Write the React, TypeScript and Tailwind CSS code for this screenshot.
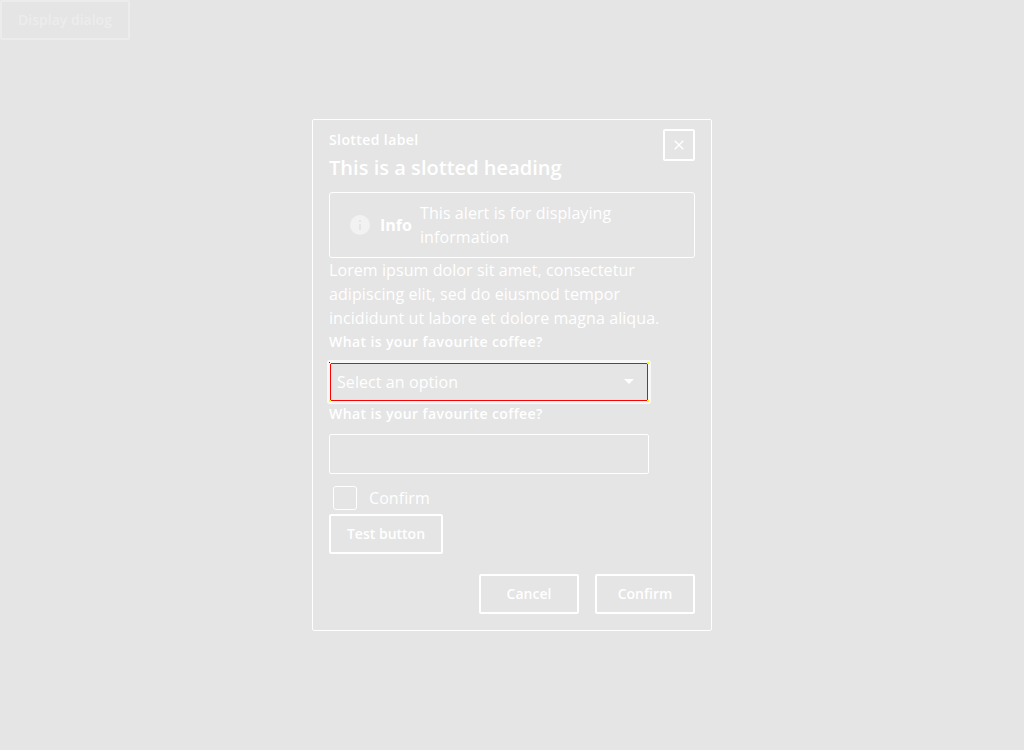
import React from "react";

function Button({ children, className }: { children: React.ReactNode; className: string }) {
  return (
    <button className={`h-10 shrink-0 rounded-[2px] border-2 text-sm font-semibold ${className}`}>
      {children}
    </button>
  );
}

export default function App() {
  return (
    <div className="relative h-[750px] w-full overflow-hidden bg-[#e5e5e5] font-['Open_Sans',sans-serif] text-base leading-6 text-white">
      <Button className="block w-[130px] border-white opacity-30">Display dialog</Button>
      <div className="absolute inset-0 flex items-center justify-center">
        <section role="dialog" className="flex h-[512px] w-[400px] flex-col rounded-[2px] border border-white px-4 pt-[9px]">
          <header className="flex h-[63px] items-start justify-between">
            <div>
              <div className="text-sm font-semibold leading-[22px] tracking-[0.4px]">Slotted label</div>
              <h2 className="mt-[3px] text-xl font-semibold leading-7 tracking-[0.03px]">This is a slotted heading</h2>
            </div>
            <button aria-label="Close" className="flex size-8 items-center justify-center rounded-[2px] border-2 border-white">
              <svg width="10" height="10" viewBox="0 0 10 10" stroke="white" strokeWidth="1.4">
                <path d="M.7.7l8.600 8.600M9.300.7l-8.600 8.600" />
              </svg>
            </button>
          </header>
          <div className="flex h-[66px] w-[366px] shrink-0 items-center rounded-[3px] border border-white pl-5">
            <svg width="20" height="20" viewBox="0 0 20 20" className="shrink-0">
              <circle cx="10" cy="10" r="10" fill="#f2f2f2" />
              <path d="M10 9v6M10 5v2" stroke="#e5e5e5" strokeWidth="2" />
            </svg>
            <strong className="ml-[10px] w-10 font-bold">Info</strong>
            <span className="w-[230px] tracking-[0.08px]">This alert is for displaying information</span>
          </div>
          <p className="w-[350px] tracking-[0.08px]">Lorem ipsum dolor sit amet, consectetur adipiscing elit, sed do eiusmod tempor incididunt ut labore et dolore magna aliqua.</p>
          <label className="text-sm font-semibold leading-6 tracking-[0.4px]">What is your favourite coffee?</label>
          <div className="relative mt-2 h-10 w-80 shrink-0 rounded-[1px] border border-[#f8f8f8] shadow-[0_0_0_2px_#f8f8f8]">
            <div className="flex h-full items-center justify-between border border-[#ff0000] pl-[6px] pr-[13px]">
              <span className="tracking-[0.08px]">Select an option</span>
              <svg width="10" height="5" viewBox="0 0 10 5" className="mb-px"><path d="M0 0h10L5 5z" fill="white" /></svg>
            </div>
            <i className="absolute -left-px -top-px size-px bg-[#990000]" />
            <i className="absolute left-0 top-0 size-px bg-[#ffff00]" />
            <i className="absolute -right-px -top-px size-[2px] bg-[#ffff00]" />
            <i className="absolute -bottom-px -left-px size-[2px] bg-[#ffff00]" />
            <i className="absolute -bottom-px -right-px size-[2px] bg-[#ffff00]" />
          </div>
          <label className="text-sm font-semibold leading-6 tracking-[0.4px]">What is your favourite coffee?</label>
          <input aria-label="Coffee" className="mt-2 h-10 w-80 shrink-0 rounded-[2px] border border-white bg-transparent" />
          <label className="flex h-10 items-center pl-1 pt-2 tracking-[0.08px]">
            <span className="mr-3 size-6 rounded-[3px] border border-white" />Confirm
          </label>
          <Button className="w-[114px] border-white">Test button</Button>
          <footer className="mt-5 flex justify-end gap-4">
            <Button className="w-[100px] border-white">Cancel</Button>
            <Button className="w-[100px] border-white">Confirm</Button>
          </footer>
        </section>
      </div>
    </div>
  );
}
